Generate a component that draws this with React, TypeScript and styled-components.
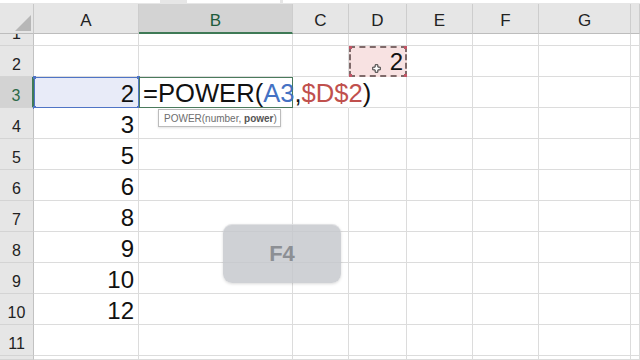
import React from 'react'
import styled, { createGlobalStyle, css } from 'styled-components'

const GlobalStyle = createGlobalStyle`
  html, body {
    margin: 0;
    padding: 0;
    background: #fff;
    overflow: hidden;
  }
  body {
    font-family: "Liberation Sans", Arial, sans-serif;
  }
`

// H is only a sliver at the right edge, its letter is out of view
const columns = ['A', 'B', 'C', 'D', 'E', 'F', 'G', 'H']
const valuesA: Record<number, number> = { 3: 2, 4: 3, 5: 5, 6: 6, 7: 8, 8: 9, 9: 10, 10: 12 }
const rows = [1, 2, 3, 4, 5, 6, 7, 8, 9, 10, 11, 12]

type Variant = 'normal' | 'selected' | 'active' | 'copy'

function Corners({ color }: { color: string }): JSX.Element {
  return (
    <>
      <S.Handle $color={color} style={{ left: -2, top: -2 }} />
      <S.Handle $color={color} style={{ right: -2, top: -2 }} />
      <S.Handle $color={color} style={{ left: -2, bottom: -2 }} />
      <S.Handle $color={color} style={{ right: -2, bottom: -2 }} />
    </>
  )
}

function CellContent({ row, col }: { row: number; col: string }): JSX.Element | null {
  if (col === 'A' && valuesA[row] !== undefined) {
    return (
      <>
        {row === 3 && <Corners color="#4f74c5" />}
        <S.Value>{valuesA[row]}</S.Value>
      </>
    )
  }
  if (col === 'B' && row === 3) {
    return (
      <>
        <S.Formula>
          =POWER(<S.Ref $color="#4472c4">A3</S.Ref>,<S.Ref $color="#c0504d">$D$2</S.Ref>)
        </S.Formula>
        <S.Tooltip>
          POWER(number, <b>power</b>)
        </S.Tooltip>
      </>
    )
  }
  if (col === 'D' && row === 2) {
    return (
      <>
        <Corners color="#c25566" />
        <S.Cursor viewBox="0 0 10 10">
          <path
            d="M3.5 0.8h3v2.7h2.7v3H6.5v2.7h-3V6.5H0.8v-3h2.7z"
            fill="#fff"
            stroke="#222"
            strokeWidth="1"
          />
        </S.Cursor>
        <S.Value>2</S.Value>
      </>
    )
  }
  return null
}

function variantOf(row: number, col: string): Variant {
  if (row === 3 && col === 'A') return 'selected'
  if (row === 3 && col === 'B') return 'active'
  if (row === 2 && col === 'D') return 'copy'
  return 'normal'
}

function App(): JSX.Element {
  return (
    <S.Page>
      <GlobalStyle />
      <S.TopStrip>
        <S.TopBox $width={160} />
        <S.TopBox $width={93} />
        <S.TopBox $width={357} />
      </S.TopStrip>
      <S.Sheet>
        <S.Corner>
          <S.Triangle />
        </S.Corner>
        {columns.map(c => (
          <S.ColHeader key={c} $active={c === 'B'}>
            {c === 'H' ? '' : c}
          </S.ColHeader>
        ))}
        {rows.map(r => (
          <React.Fragment key={r}>
            <S.RowHeader $active={r === 3}>{r === 12 ? '' : r}</S.RowHeader>
            {columns.map(c => (
              <S.Cell
                key={c}
                $variant={variantOf(r, c)}
                $numeric={c !== 'B'}
                $noRight={r === 3 && c === 'C'}
              >
                <CellContent row={r} col={c} />
              </S.Cell>
            ))}
          </React.Fragment>
        ))}
      </S.Sheet>
      <S.Key>F4</S.Key>
    </S.Page>
  )
}

const S = {
  Page: styled.div`
    position: relative;
    width: 640px;
    height: 360px;
    overflow: hidden;
    background: #fff;
  `,
  TopStrip: styled.div`
    display: flex;
    gap: 27px;
    height: 4px;
    background: #e6e6e6;
    & > :nth-child(2) {
      margin-right: -24px;
    }
  `,
  TopBox: styled.div<{ $width: number }>`
    width: ${p => p.$width}px;
    height: 3px;
    background: #fff;
  `,
  Sheet: styled.div`
    display: grid;
    grid-template-columns: 34px 105px 154px 56px 58px 66px 66px 92px 1fr;
    grid-template-rows: 30px 12px repeat(10, 31px) 1fr;
    height: 356px;
    overflow: hidden;
  `,
  Corner: styled.div`
    display: flex;
    align-items: flex-end;
    justify-content: flex-end;
    padding: 0 2px 2px 0;
    background: #e6e6e6;
    border-right: 1px solid #c8c8c8;
    border-bottom: 1px solid #bdbdbd;
  `,
  Triangle: styled.div`
    width: 0;
    height: 0;
    border-left: 16px solid transparent;
    border-bottom: 16px solid #b7b7b7;
  `,
  ColHeader: styled.div<{ $active: boolean }>`
    display: flex;
    align-items: flex-end;
    justify-content: center;
    padding-bottom: 4px;
    font-size: 17px;
    line-height: 17px;
    color: #222;
    background: #e6e6e6;
    border-right: 1px solid #cdcdcd;
    border-bottom: 1px solid #bdbdbd;
    ${p =>
      p.$active &&
      css`
        background: #d3d3d3;
        color: #1f5c3c;
        border-bottom: 2px solid #3f7a56;
        padding-bottom: 3px;
      `}
  `,
  RowHeader: styled.div<{ $active: boolean }>`
    display: flex;
    align-items: flex-end;
    justify-content: center;
    overflow: hidden;
    padding-bottom: 3px;
    font-size: 16px;
    line-height: 16px;
    color: #222;
    background: #e6e6e6;
    border-right: 1px solid #c2c2c2;
    border-bottom: 1px solid #d4d4d4;
    ${p =>
      p.$active &&
      css`
        background: #d3d3d3;
        color: #2c6a48;
        border-right: 2px solid #3f7a56;
      `}
  `,
  Cell: styled.div<{ $variant: Variant; $numeric: boolean; $noRight: boolean }>`
    position: relative;
    display: flex;
    align-items: flex-end;
    justify-content: ${p => (p.$numeric ? 'flex-end' : 'flex-start')};
    padding: 0 4px 1px 3px;
    background: #fff;
    border-right: 1px solid ${p => (p.$noRight ? '#fff' : '#dcdcdc')};
    border-bottom: 1px solid #dcdcdc;
    ${p =>
      p.$variant === 'selected' &&
      css`
        background: #e8ebf8;
        border: 1.5px solid #4f74c5;
      `}
    ${p =>
      p.$variant === 'active' &&
      css`
        z-index: 2;
        border: 1.5px solid #4a7a5c;
        padding-left: 3px;
      `}
    ${p =>
      p.$variant === 'copy' &&
      css`
        background: #f8e2e2;
        border: 2px dashed #7f6a6a;
        padding-right: 2px;
      `}
  `,
  Value: styled.span`
    font-size: 24px;
    line-height: 24px;
    color: #111;
  `,
  Formula: styled.span`
    font-size: 25.6px;
    line-height: 24px;
    color: #111;
    white-space: nowrap;
    margin-bottom: 1px;
  `,
  Ref: styled.span<{ $color: string }>`
    color: ${p => p.$color};
  `,
  Tooltip: styled.div`
    position: absolute;
    left: 18px;
    top: 31px;
    width: 123px;
    height: 18px;
    box-sizing: border-box;
    padding: 2px 0 0 5px;
    font-size: 10px;
    line-height: 13px;
    color: #6d6d6d;
    white-space: nowrap;
    background: #fff;
    border: 1px solid #bcbcbc;
    box-shadow: 0 1px 2px rgba(0, 0, 0, 0.12);
    b {
      color: #555;
    }
  `,
  Handle: styled.span<{ $color: string }>`
    position: absolute;
    width: 3px;
    height: 3px;
    background: ${p => p.$color};
  `,
  Cursor: styled.svg`
    position: absolute;
    left: 21px;
    top: 16px;
    width: 9px;
    height: 9px;
  `,
  Key: styled.div`
    position: absolute;
    left: 223px;
    top: 224px;
    width: 118px;
    height: 59px;
    display: flex;
    align-items: center;
    justify-content: center;
    border-radius: 9px;
    background: rgba(196, 199, 204, 0.82);
    box-shadow: 0 1px 3px rgba(0, 0, 0, 0.15), inset 0 1px 0 rgba(255, 255, 255, 0.35);
    font-size: 22px;
    font-weight: bold;
    color: #8c8f94;
  `,
}

export default App
